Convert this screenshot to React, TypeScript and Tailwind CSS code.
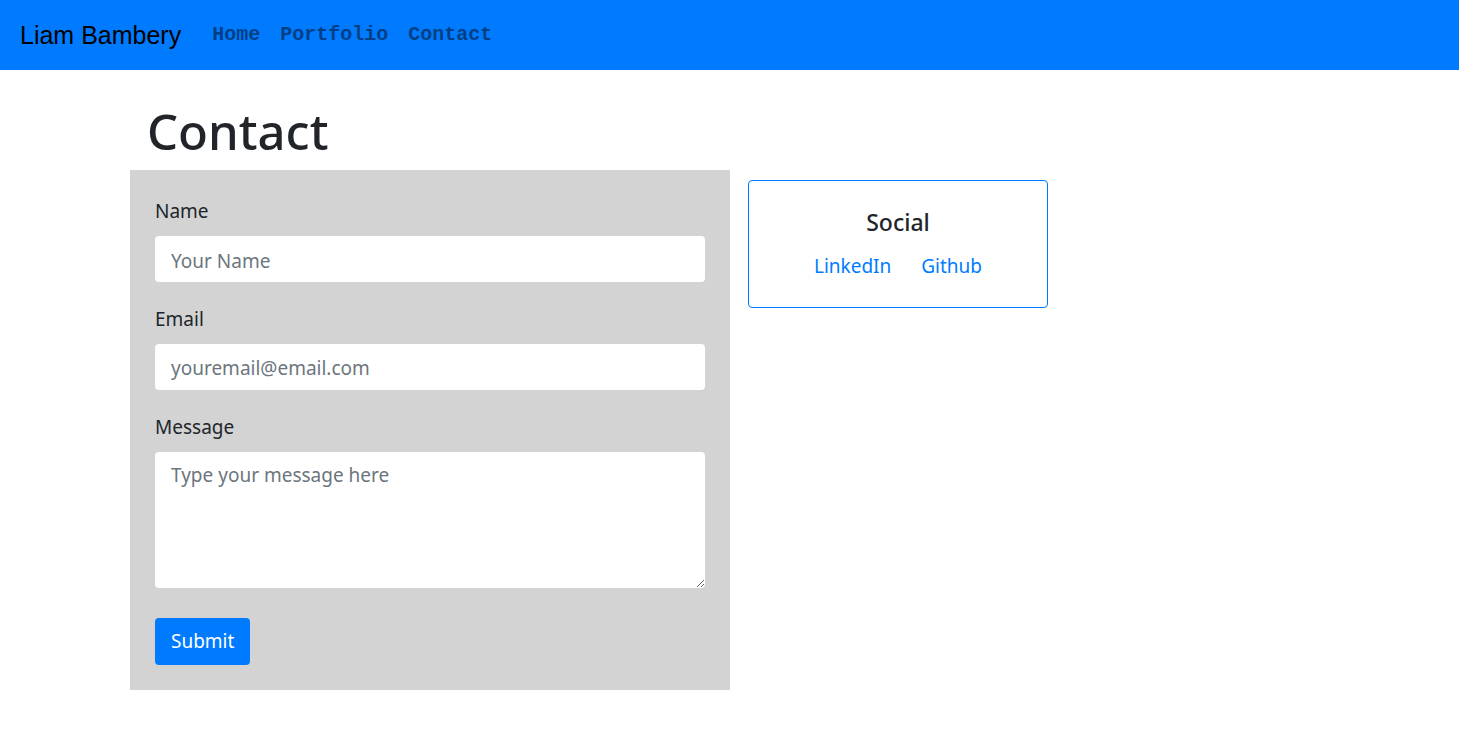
const SANS = "font-['Segoe_UI','Noto_Sans',sans-serif]";

function Field({ label, children }: { label: string; children: React.ReactNode }) {
  return (
    <div className="mb-[22px] flex flex-col">
      <label className="mb-[10px] text-[19px] leading-[30px] text-[#212529]">{label}</label>
      {children}
    </div>
  );
}

export default function App() {
  return (
    <div className={`min-h-[753px] bg-white ${SANS}`}>
      <nav className="flex h-[70px] items-center bg-[#007bff] px-[20px]">
        <span className="mr-[31px] font-['Liberation_Sans',Arial,sans-serif] text-[25px] leading-none text-black">Liam Bambery</span>
        <ul className="flex gap-[20px] font-['Liberation_Mono','Courier_New',monospace] text-[20px] font-bold text-[#003f84]">
          <li>Home</li>
          <li>Portfolio</li>
          <li>Contact</li>
        </ul>
      </nav>

      <main className="ml-[130px] pt-[30px]">
        <h1 className="mb-[8px] pl-[17px] text-[49px] font-medium leading-[62px] text-[#212529]">Contact</h1>
        <div className="flex items-start gap-[18px]">
          <form className="w-[600px] bg-[#d3d3d3] px-[25px] pt-[26px] pb-[25px]">
            <Field label="Name">
              <input
                placeholder="Your Name"
                className="h-[46px] rounded-[4px] bg-white px-[16px] pt-[3px] text-[19px] text-[#495057] outline-none placeholder:text-[#6c757d]"
              />
            </Field>
            <Field label="Email">
              <input
                placeholder="youremail@email.com"
                className="h-[46px] rounded-[4px] bg-white px-[16px] pt-[1px] text-[19px] text-[#495057] outline-none placeholder:text-[#6c757d]"
              />
            </Field>
            <Field label="Message">
              <textarea
                placeholder="Type your message here"
                className="h-[136px] rounded-[4px] bg-white px-[16px] py-[8px] text-[19px] leading-[30px] text-[#495057] outline-none placeholder:text-[#6c757d]"
              />
            </Field>
            <button
              type="button"
              className="mt-[8px] h-[47px] rounded-[4px] bg-[#007bff] px-[16px] text-[19px] text-white"
            >
              Submit
            </button>
          </form>

          <div className="mt-[10px] flex h-[128px] w-[300px] flex-col items-center rounded-[4px] border border-[#007bff] pt-[23px]">
            <h4 className="text-[23px] font-medium leading-[36px] text-[#212529]">Social</h4>
            <div className="mt-[12px] flex gap-[30px] text-[19px] text-[#007bff]">
              <a>LinkedIn</a>
              <a>Github</a>
            </div>
          </div>
        </div>
      </main>
    </div>
  );
}
